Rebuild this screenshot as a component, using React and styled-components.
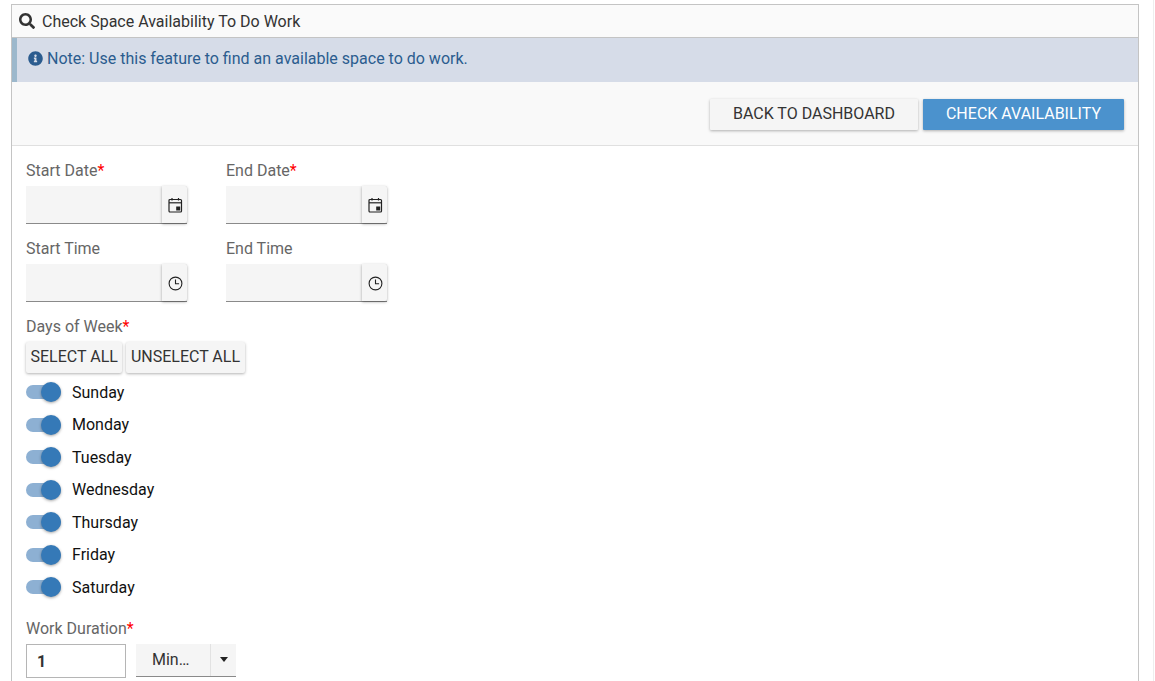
import styled, { createGlobalStyle } from "styled-components";
import { FaSearch, FaInfoCircle } from "react-icons/fa";

const GlobalStyle = createGlobalStyle`
  html, body {
    margin: 0;
    height: 100%;
    overflow: hidden;
    background: #fff;
    font-family: Roboto, "Liberation Sans", sans-serif;
  }
`;

const Page = styled.div`
  height: 681px;
  padding: 4px 15px 0 11px;
  box-sizing: border-box;
  border-right: 1px solid #eeeeee;
  width: 1154px;
  overflow: hidden;
`;

const Panel = styled.div`
  border: 1px solid #c4c4c4;
  width: 1128px;
  box-sizing: border-box;
  height: 700px;
`;

const PanelHeader = styled.div`
  display: flex;
  align-items: center;
  gap: 7px;
  height: 32px;
  padding-left: 7px;
  background: #fafafa;
  border-bottom: 1px solid #c4c4c4;
  color: #333;
  font-size: 16px;
`;

const Note = styled.div`
  display: flex;
  align-items: center;
  gap: 4px;
  height: 44px;
  padding: 0 0 3px 11px;
  box-sizing: border-box;
  background: #d6dce8;
  border-left: 5px solid #9cb8cc;
  color: #2b5c8f;
  font-size: 16px;
`;

const Toolbar = styled.div`
  display: flex;
  justify-content: flex-end;
  align-items: flex-start;
  gap: 5px;
  height: 64px;
  padding: 17px 14px 0 0;
  box-sizing: border-box;
  background: #f9f9f9;
  border-bottom: 1px solid #e0e0e0;
`;

const Button = styled.button`
  height: 31px;
  border: none;
  border-radius: 1px;
  padding: 0 ${(p) => p.$pad}px 2px;
  background: ${(p) => (p.$primary ? "#4b92cd" : "#f5f5f5")};
  color: ${(p) => (p.$primary ? "#fff" : "#333")};
  font-family: inherit;
  font-size: 16px;
  white-space: nowrap;
  box-shadow: 0 1px 3px rgba(0, 0, 0, 0.3);
`;

const Form = styled.div`
  padding: 14px 14px 0;
`;

const FieldRow = styled.div`
  display: flex;
  gap: 39px;
  margin-bottom: 14px;
`;

const Field = styled.div`
  width: 161px;
`;

const Label = styled.div`
  height: 26px;
  line-height: 21px;
  color: #666;
  font-size: 16px;
`;

const Required = styled.span`
  color: #f00;
`;

const InputWrap = styled.div`
  display: flex;
  height: 38px;
  background: #f5f5f5;
  border-bottom: 1px solid #8a8a8a;
  box-sizing: border-box;
`;

const InputBlank = styled.div`
  flex: 1;
`;

const IconButton = styled.div`
  display: flex;
  align-items: center;
  justify-content: center;
  width: 25px;
  padding-left: 1px;
  box-sizing: border-box;
  background: #f5f5f5;
  box-shadow: 0 1px 3px rgba(0, 0, 0, 0.35);
  border-radius: 0 2px 2px 0;
`;

const ButtonRow = styled.div`
  display: flex;
  gap: 4px;
  margin-bottom: 3px;
`;

const SmallButton = styled(Button)`
  padding: 0 4.5px 2px;
  border-radius: 2px;
`;

const DayRow = styled.div`
  display: flex;
  align-items: center;
  gap: 11px;
  height: 32.5px;
  color: #111;
  font-size: 16px;
`;

const Track = styled.div`
  position: relative;
  width: 35px;
  height: 14px;
  border-radius: 7px;
  background: #8db0d3;
`;

const Knob = styled.div`
  position: absolute;
  top: -3px;
  right: 0;
  width: 20px;
  height: 20px;
  border-radius: 50%;
  background: #3579b7;
  box-shadow: 0 1px 3px rgba(0, 0, 0, 0.35);
`;

const DurationLabel = styled(Label)`
  margin-top: 14px;
`;

const DurationRow = styled.div`
  display: flex;
  gap: 10px;
`;

const NumberBox = styled.div`
  width: 100px;
  height: 34px;
  box-sizing: border-box;
  border: 1px solid #b5b5b5;
  padding-left: 10px;
  line-height: 33px;
  color: #333;
  font-size: 16px;
  font-weight: 700;
`;

const Select = styled.div`
  display: flex;
  width: 100px;
  height: 32px;
  background: #f5f5f5;
  border-bottom: 1px solid #8a8a8a;
  color: #333;
  font-size: 16px;
`;

const SelectValue = styled.div`
  flex: 1;
  padding-left: 16px;
  line-height: 31px;
  border-right: 1px solid #e2e2e2;
`;

const SelectArrow = styled.div`
  display: flex;
  align-items: center;
  justify-content: center;
  width: 25px;
`;

const CalendarIcon = () => (
  <svg width="15" height="16" viewBox="0 0 15 16" fill="none">
    <rect x="1" y="2.5" width="12.5" height="12.5" rx="1" stroke="#222" strokeWidth="1.2" />
    <path d="M1 5.8h12.5" stroke="#222" strokeWidth="1.2" />
    <path d="M4 1v2.5M10.5 1v2.5" stroke="#222" strokeWidth="1.2" />
    <rect x="8.2" y="9.5" width="4" height="4" fill="#222" />
  </svg>
);

const ClockIcon = () => (
  <svg width="15" height="16" viewBox="0 -1 15 16" fill="none">
    <circle cx="7.5" cy="7.5" r="6.4" stroke="#222" strokeWidth="1.1" />
    <path d="M7.5 3.6v4.2h3.6" stroke="#222" strokeWidth="1.1" />
  </svg>
);

const DAYS = ["Sunday", "Monday", "Tuesday", "Wednesday", "Thursday", "Friday", "Saturday"];

function DateField({ label, required, icon }) {
  return (
    <Field>
      <Label>
        {label}
        {required && <Required>*</Required>}
      </Label>
      <InputWrap>
        <InputBlank />
        <IconButton>{icon}</IconButton>
      </InputWrap>
    </Field>
  );
}

export default function App() {
  return (
    <Page>
      <GlobalStyle />
      <Panel>
        <PanelHeader>
          <FaSearch size={16} color="#333" />
          Check Space Availability To Do Work
        </PanelHeader>
        <Note>
          <FaInfoCircle size={15} color="#2b5c8f" />
          Note: Use this feature to find an available space to do work.
        </Note>
        <Toolbar>
          <Button $pad={23}>BACK TO DASHBOARD</Button>
          <Button $primary $pad={23}>CHECK AVAILABILITY</Button>
        </Toolbar>
        <Form>
          <FieldRow>
            <DateField label="Start Date" required icon={<CalendarIcon />} />
            <DateField label="End Date" required icon={<CalendarIcon />} />
          </FieldRow>
          <FieldRow>
            <DateField label="Start Time" icon={<ClockIcon />} />
            <DateField label="End Time" icon={<ClockIcon />} />
          </FieldRow>
          <Label>
            Days of Week<Required>*</Required>
          </Label>
          <ButtonRow>
            <SmallButton>SELECT ALL</SmallButton>
            <SmallButton>UNSELECT ALL</SmallButton>
          </ButtonRow>
          {DAYS.map((day) => (
            <DayRow key={day}>
              <Track>
                <Knob />
              </Track>
              {day}
            </DayRow>
          ))}
          <DurationLabel>
            Work Duration<Required>*</Required>
          </DurationLabel>
          <DurationRow>
            <NumberBox>1</NumberBox>
            <Select>
              <SelectValue>Min…</SelectValue>
              <SelectArrow>
                <svg width="8" height="5" viewBox="0 0 8 5">
                  <path d="M0 0h8L4 5z" fill="#222" />
                </svg>
              </SelectArrow>
            </Select>
          </DurationRow>
        </Form>
      </Panel>
    </Page>
  );
}
